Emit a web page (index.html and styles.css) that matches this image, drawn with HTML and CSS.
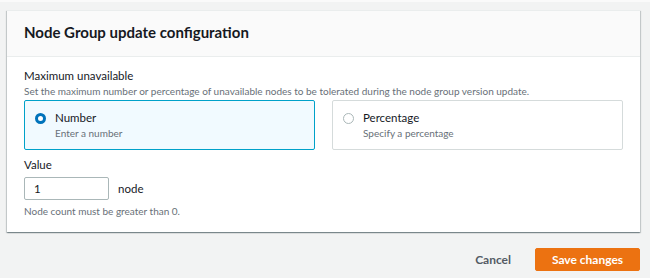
FILE: index.html
```html
<!DOCTYPE html>
<html>
<head>
<meta charset="utf-8">
<link rel="stylesheet" href="styles.css">
</head>
<body>
<div class="page">
  <section class="card">
    <header class="card-header"><h2 class="title">Node Group update configuration</h2></header>
    <div class="card-body">
      <div class="field-label">Maximum unavailable</div>
      <div class="field-desc">Set the maximum number or percentage of unavailable nodes to be tolerated during the node group version update.</div>
      <div class="tiles">
        <div class="tile selected">
          <span class="radio checked"></span>
          <div class="tile-text">
            <div class="tile-title">Number</div>
            <div class="tile-sub">Enter a number</div>
          </div>
        </div>
        <div class="tile">
          <span class="radio"></span>
          <div class="tile-text">
            <div class="tile-title">Percentage</div>
            <div class="tile-sub">Specify a percentage</div>
          </div>
        </div>
      </div>
      <div class="value-label">Value</div>
      <div class="value-row">
        <div class="input">1</div>
        <span class="unit">node</span>
      </div>
      <div class="hint">Node count must be greater than 0.</div>
    </div>
  </section>
  <div class="actions">
    <button class="btn-link">Cancel</button>
    <button class="btn-primary">Save changes</button>
  </div>
</div>
</body>
</html>
```
FILE: styles.css
```css
* { box-sizing: border-box; }
html, body { margin: 0; padding: 0; }
body {
  background: #f2f3f3;
  font-family: Lato, "Liberation Sans", Arial, sans-serif;
  color: #16191f;
  width: 650px;
  height: 278px;
  overflow: hidden;
}
.page {
  border-top: 2px solid #fafafa;
  padding: 8px 10px 0 7px;
}
.card {
  background: #fff;
  width: 633px;
  height: 222px;
  box-shadow: 0 1px 1px 0 rgba(0,28,36,.3), 1px 1px 1px 0 rgba(0,28,36,.15), -1px 1px 1px 0 rgba(0,28,36,.15);
  border-top: 1px solid #eaeded;
}
.card-header {
  height: 46px;
  background: #fafafa;
  border-bottom: 1px solid #eaeded;
  display: flex;
  align-items: center;
  padding: 0 0 3px 17px;
}
.title {
  margin: 0;
  font-size: 15px;
  font-weight: 700;
  line-height: 20px;
}
.card-body {
  padding: 11px 17px 0 17px;
}
.field-label {
  font-size: 11.5px;
  line-height: 16px;
}
.field-desc {
  font-size: 10px;
  line-height: 14px;
  color: #687078;
}
.tiles {
  display: flex;
  gap: 17px;
  margin-top: 2px;
}
.tile {
  width: 291px;
  height: 50px;
  border: 1px solid #d5dbdb;
  border-radius: 2px;
  display: flex;
  align-items: flex-start;
  padding: 9px 10px;
}
.tile.selected {
  border-color: #00a1c9;
  background: #f1faff;
}
.radio {
  width: 11px;
  height: 11px;
  border-radius: 50%;
  border: 1px solid #aab7b8;
  background: #fff;
  margin-top: 3px;
  flex: none;
}
.radio.checked {
  border: 3px solid #0073bb;
}
.tile-text {
  margin-left: 9px;
}
.tile-title {
  font-size: 11.5px;
  line-height: 16px;
}
.tile-sub {
  font-size: 10px;
  line-height: 14px;
  color: #687078;
}
.value-label {
  margin-top: 7px;
  font-size: 11.5px;
  line-height: 16px;
}
.value-row {
  display: flex;
  align-items: center;
  margin-top: 4px;
}
.input {
  width: 85px;
  height: 23px;
  border: 1px solid #aab7b8;
  border-radius: 2px;
  padding: 0 9px;
  font-size: 11.5px;
  line-height: 21px;
}
.unit {
  margin-left: 9px;
  font-size: 11.5px;
}
.hint {
  margin-top: 4px;
  font-size: 10px;
  line-height: 14px;
  color: #687078;
}
.actions {
  display: flex;
  justify-content: flex-end;
  align-items: center;
  gap: 4px;
  margin-top: 16px;
}
.btn-link {
  background: none;
  border: none;
  font-family: inherit;
  font-weight: 700;
  font-size: 12px;
  color: #545b64;
  padding: 0 20px;
  height: 23px;
}
.btn-primary {
  font-family: inherit;
  background: #ec7211;
  border: 1px solid #ec7211;
  border-radius: 2px;
  color: #fff;
  font-weight: 700;
  font-size: 12px;
  width: 105px;
  height: 23px;
  padding: 0;
}
```
